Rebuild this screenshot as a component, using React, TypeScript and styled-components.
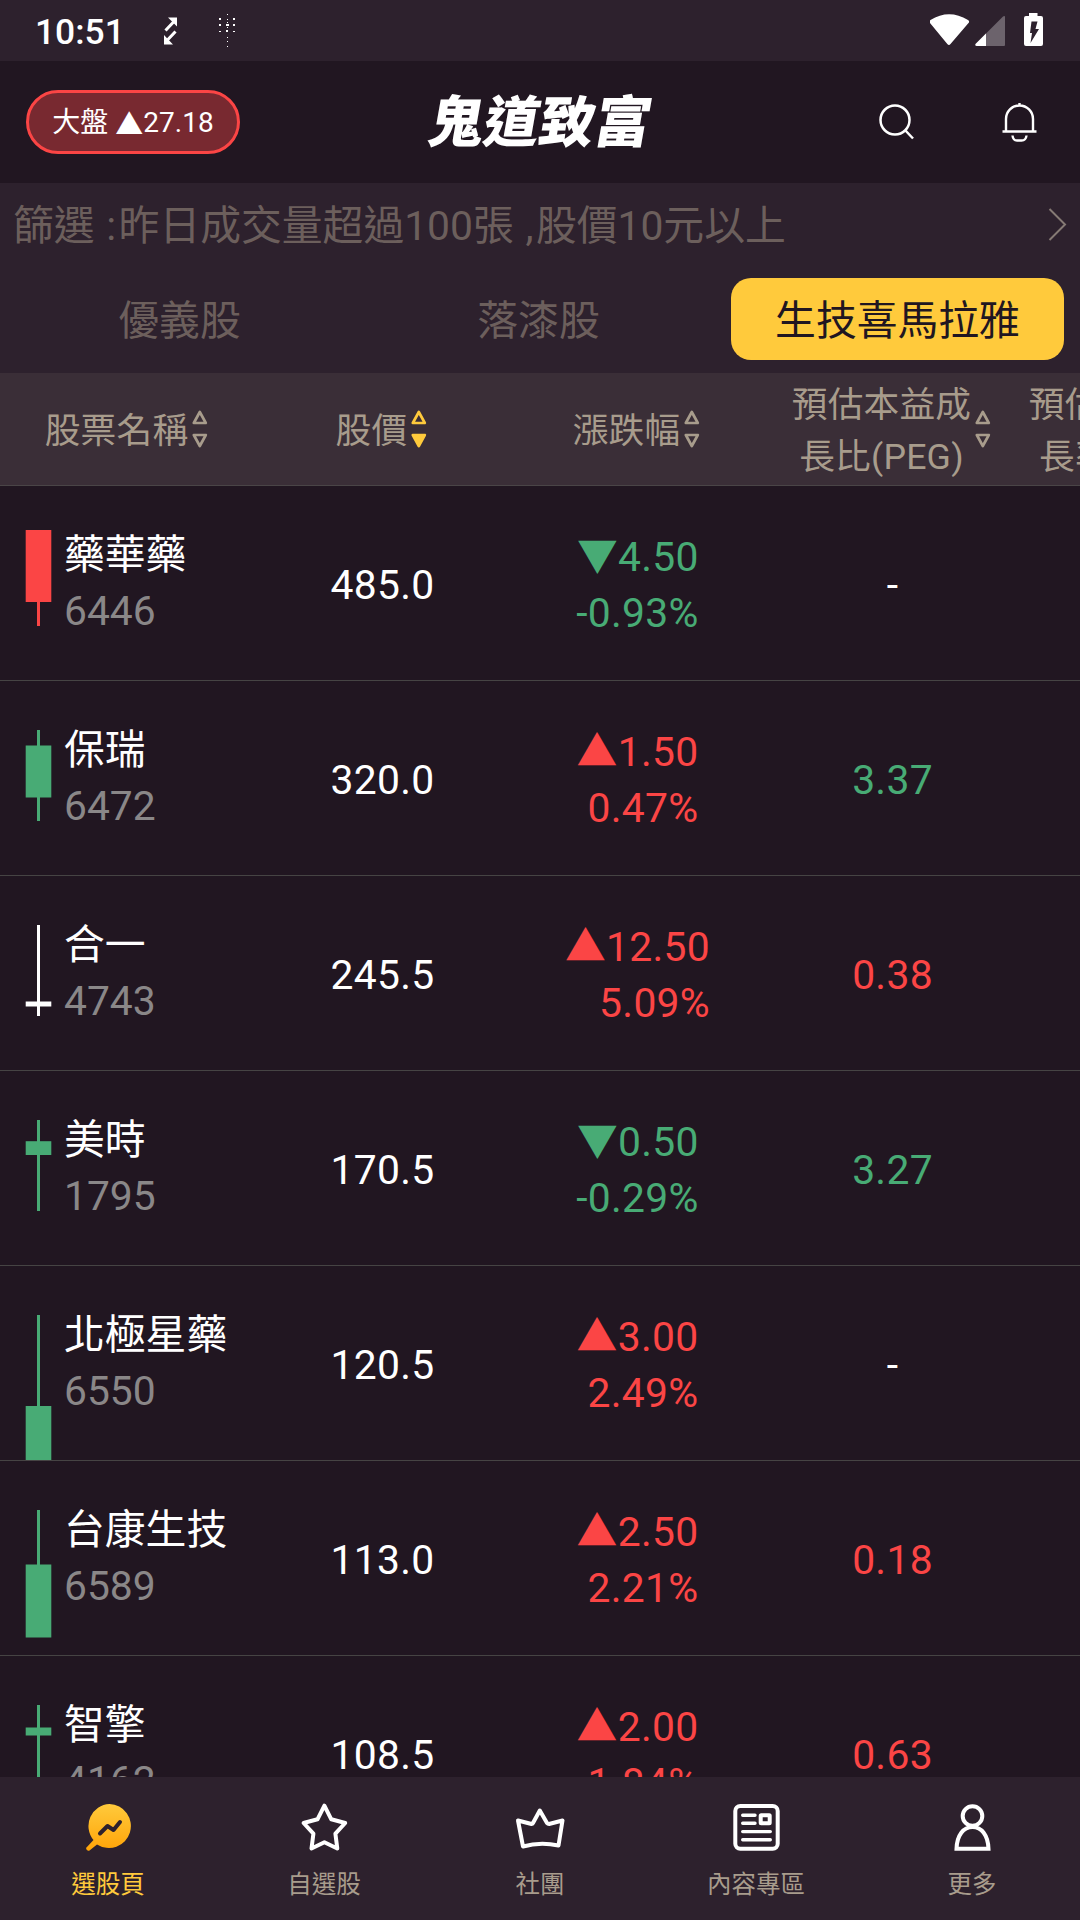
import React from "react";
import styled, { createGlobalStyle } from "styled-components";

const RED = "#fb4545";
const GREEN = "#48ab75";
const YELLOW = "#ffca3c";
const MUTED = "#a89c8c";

const Global = createGlobalStyle`
  * { box-sizing: border-box; }
  body { margin: 0; background: #211621; }
`;

const Screen = styled.div`
  width: 1080px;
  height: 1920px;
  overflow: hidden;
  display: flex;
  flex-direction: column;
  background: #211621;
  color: #fff;
  font-family: Roboto, "Noto Sans CJK TC", sans-serif;
  font-size: 40.8px;
  white-space: nowrap;
`;

const StatusBar = styled.div`
  height: 61px;
  flex: none;
  display: flex;
  align-items: center;
  justify-content: space-between;
  padding: 0 34px 0 35px;
  background: #2d212d;
`;

const StatusGroup = styled.div`
  display: flex;
  align-items: center;
  height: 61px;
`;

const Clock = styled.span`
  width: 128px;
  font-size: 35.4px;
  font-weight: 500;
  line-height: 61px;
  padding-top: 4px;
`;

const NoticeIcons = styled.div`
  display: flex;
  align-items: center;
  gap: 40px;
`;

const Header = styled.header`
  height: 122px;
  flex: none;
  display: grid;
  grid-template-columns: 1fr auto 1fr;
  align-items: center;
  padding: 0 43px 0 43px;
`;

const IndexPill = styled.div`
  justify-self: start;
  width: 214px;
  height: 64px;
  margin-left: -17px;
  padding-top: 2px;
  border: 3px solid ${RED};
  border-radius: 32px;
  background: #782930;
  display: flex;
  align-items: center;
  justify-content: center;
  font-size: 28px;
  line-height: 40px;
`;

const Brand = styled.h1`
  margin: 0 0 8px 3px;
  font-family: "Noto Sans CJK TC", sans-serif;
  font-size: 55.5px;
  line-height: 70px;
  font-weight: 900;
  transform: skewX(-10deg);
`;

const HeaderIcons = styled.div`
  justify-self: end;
  display: flex;
  align-items: center;
  gap: 86px;
`;

const FilterBar = styled.div`
  height: 82px;
  flex: none;
  display: flex;
  align-items: center;
  justify-content: space-between;
  padding: 0 13px;
  background: #2d212d;
  color: #6c5f5c;
`;

const FilterText = styled.div`
  line-height: 60px;
  padding-top: 3px;
`;

const Punct = styled.span`
  margin: 0 2.5px 0 1.5px;
`;

const Tabs = styled.nav`
  height: 108px;
  flex: none;
  display: grid;
  grid-template-columns: repeat(3, 333px);
  gap: 26px;
  padding: 13px;
  background: #2d212d;
`;

const Tab = styled.button<{ $active?: boolean }>`
  border: 0;
  padding: 0 0 4px 0;
  font: inherit;
  border-radius: 20px;
  background: ${(p) => (p.$active ? YELLOW : "transparent")};
  color: ${(p) => (p.$active ? "#211621" : "#6c5f5c")};
`;

const COLUMNS = "repeat(5, 255px)";

const TableHead = styled.div`
  height: 113px;
  flex: none;
  display: grid;
  grid-template-columns: ${COLUMNS};
  background: #3a2e37;
  border-bottom: 1px solid #4a4547;
  color: ${MUTED};
  font-size: 35.7px;
  line-height: 52px;
`;

const HeadCell = styled.div`
  display: flex;
  align-items: center;
  justify-content: center;
  text-align: center;
  white-space: pre-line;
`;

const HeadLabel = styled.span`
  padding-top: 3px;
  letter-spacing: 0.2px;
`;

const List = styled.main`
  flex: 1;
  min-height: 0;
  overflow: hidden;
`;

const Row = styled.div`
  height: 195px;
  display: grid;
  grid-template-columns: ${COLUMNS};
  border-bottom: 1px solid #464444;
  overflow: hidden;
`;

const Cell = styled.div<{ $color?: string }>`
  display: flex;
  align-items: center;
  justify-content: center;
  padding-top: 3px;
  letter-spacing: 0.3px;
  color: ${(p) => p.$color ?? "#fff"};
`;

const NameCell = styled.div`
  display: flex;
  gap: 12px;
  padding-left: 25px;
`;

const NameText = styled.div`
  padding-top: 41px;
  line-height: 56px;
`;

const Code = styled.div`
  color: #8a8788;
`;

const Change = styled.div`
  text-align: right;
  line-height: 56px;
`;

const Arrow = styled.span`
  font-family: "Noto Sans CJK TC", sans-serif;
  line-height: 1;
`;

const BottomNav = styled.nav`
  height: 143px;
  flex: none;
  display: grid;
  grid-template-columns: repeat(5, 216px);
  background: #2d212d;
`;

const NavItem = styled.div<{ $active?: boolean }>`
  display: flex;
  flex-direction: column;
  align-items: center;
  padding-top: 25px;
  gap: 15px;
  font-size: 24.5px;
  line-height: 36px;
  color: ${(p) => (p.$active ? YELLOW : MUTED)};
`;

type Sort = "none" | "desc";

function SortIcon({ sort = "none" }: { sort?: Sort }) {
  const c = sort === "desc" ? YELLOW : MUTED;
  return (
    <svg width="22" height="38" viewBox="0 0 22 38" fill="none" stroke={c} strokeWidth="2.7" strokeLinejoin="round">
      <path d="M11.8 2 L17.8 13 H5.8 Z" />
      <path d="M11.8 36 L17.8 25 H5.8 Z" fill={sort === "desc" ? c : "none"} />
    </svg>
  );
}

interface CandleData {
  color: string;
  wick: [number, number];
  body: [number, number];
}

function Candle({ color, wick, body }: CandleData) {
  return (
    <svg width="27" height="194" viewBox="0 0 27 194" fill={color}>
      <rect x="12" y={wick[0]} width="3" height={wick[1] - wick[0]} />
      <rect x="0.7" y={body[0]} width="25.6" height={body[1] - body[0]} />
    </svg>
  );
}

interface Stock {
  name: string;
  code: string;
  price: string;
  up: boolean;
  change: string;
  percent: string;
  peg: string;
  pegColor?: string;
  candle: CandleData;
}

const stocks: Stock[] = [
  { name: "藥華藥", code: "6446", price: "485.0", up: false, change: "4.50", percent: "-0.93%", peg: "-", candle: { color: RED, wick: [44, 140], body: [44, 116] } },
  { name: "保瑞", code: "6472", price: "320.0", up: true, change: "1.50", percent: "0.47%", peg: "3.37", pegColor: GREEN, candle: { color: GREEN, wick: [49, 140], body: [64.5, 116.5] } },
  { name: "合一", code: "4743", price: "245.5", up: true, change: "12.50", percent: "5.09%", peg: "0.38", pegColor: RED, candle: { color: "#fff", wick: [49, 140], body: [125.5, 130.5] } },
  { name: "美時", code: "1795", price: "170.5", up: false, change: "0.50", percent: "-0.29%", peg: "3.27", pegColor: GREEN, candle: { color: GREEN, wick: [49, 140], body: [70.2, 84] } },
  { name: "北極星藥", code: "6550", price: "120.5", up: true, change: "3.00", percent: "2.49%", peg: "-", candle: { color: GREEN, wick: [49, 140], body: [140, 194] } },
  { name: "台康生技", code: "6589", price: "113.0", up: true, change: "2.50", percent: "2.21%", peg: "0.18", pegColor: RED, candle: { color: GREEN, wick: [49, 140], body: [103.5, 176.5] } },
  { name: "智擎", code: "4162", price: "108.5", up: true, change: "2.00", percent: "1.84%", peg: "0.63", pegColor: RED, candle: { color: GREEN, wick: [49, 140], body: [71.5, 79.5] } },
];

const heads: { label: string; sort?: Sort }[] = [
  { label: "股票名稱" },
  { label: "股價", sort: "desc" },
  { label: "漲跌幅" },
  { label: "預估本益成\n長比(PEG)" },
  { label: "預估營收年成\n長率 (YoY%)" },
];

const LinkIcon = () => (
  <svg width="15" height="28" viewBox="0 0 15 28">
    <path d="M2.5 13.5 L11 4.5 M12.5 14.5 L4 23.5" stroke="#fff" strokeWidth="3" />
    <path d="M5 0.5 H14 V9.5 Z M1 18 V27.5 H10 Z" fill="#fff" />
  </svg>
);

const DotsIcon = () => (
  <svg width="18" height="36" viewBox="0 0 18 36" fill="#fff">
    <path d="M1 5h2v2h-2z M15 5h2v2h-2z M1 11h2v2h-2z M8 11h3v2h-3z M15 11h2v2h-2z M1 18h2v1h-2z M8 17h2v2h-2z M15 18h2v1h-2z M9 1h1v1h-1z M9 6h1v1h-1z M9 9h1v1h-1z M9 14h1v1h-1z M9 24h1v1h-1z M9 28h1v1h-1z M9 33h1v1h-1z" />
  </svg>
);

const StatusIcons = () => (
  <svg width="116" height="35" viewBox="0 0 116 35" fill="#fff">
    <path d="M0 10 Q-1 8.500 0.500 7 Q19 -4.500 38 7 Q40 8.500 38.500 10 L20.500 31 Q19 33 17.300 31 Z" />
    <path d="M75 3.5 V32 Q75 33 74 33 H46.500 Q44.500 32.500 45.500 31 L73 3.500 Q74.500 2.500 75 3.500 Z" fill="#6c636c" />
    <path d="M56 20.500 V33 H46.500 Q44.500 32.500 45.500 31 Z" />
    <path d="M99 0 H107.500 V3 H111 Q113 3 113 5 V31 Q113 33 111 33 H96 Q94 33 94 31 V5 Q94 3 96 3 H99 Z" />
    <path d="M101.500 8.500 H107.500 L105.500 16 H109 L100.500 30 L102 20 H100 Z" fill="#2d212d" />
  </svg>
);

const SearchIcon = () => (
  <svg width="36" height="36" viewBox="0 0 36 36" fill="none" stroke="#fff" strokeWidth="2.500">
    <circle cx="16" cy="16" r="14.500" />
    <path d="M26 26 L34 34.500" />
  </svg>
);

const BellIcon = () => (
  <svg width="36" height="40" viewBox="0 0 36 40" fill="none" stroke="#fff" strokeWidth="2.400">
    <path d="M5 29 V17 A13.500 13.500 0 0 1 32 17 V29 M1.500 29.500 H35.500 M18.500 1 V4" />
    <path d="M11.500 33.500 Q12 38.500 16 38.500 H20.500 Q25 38.500 25.500 33.500" />
  </svg>
);

const ChevronIcon = () => (
  <svg width="20" height="34" viewBox="0 0 20 34" fill="none" stroke="#857a74" strokeWidth="2">
    <path d="M2.500 2 L18 17.500 L2.500 33" />
  </svg>
);

const PickIcon = () => (
  <svg width="48" height="50" viewBox="0 0 48 50">
    <defs>
      <linearGradient id="pick" x1="0" y1="0" x2="0" y2="1">
        <stop offset="0" stopColor="#ffca3c" />
        <stop offset="1" stopColor="#ffa408" />
      </linearGradient>
    </defs>
    <path d="M25.500 2 A22 22 0 1 1 13 42.500 L5.500 48.500 Q2.500 49.500 2 46 L9.500 38 A22 22 0 0 1 25.500 2 Z" fill="url(#pick)" />
    <path d="M16 31.500 L23.500 24 L29.500 28 L36 20" fill="none" stroke="#2d212d" strokeWidth="4" strokeLinecap="round" strokeLinejoin="round" />
  </svg>
);

const line = { fill: "none", stroke: "#fff", strokeWidth: 4, strokeLinejoin: "round" as const, strokeLinecap: "round" as const };

const StarIcon = () => (
  <svg width="48" height="50" viewBox="0 0 48 50" {...line}>
    <path d="M24.400 3.700 L31.300 17.300 L45.200 21 L35.400 31.700 L37.300 46.500 L24.400 40.300 L11.500 46.500 L13.400 31.700 L3.600 21 L17.500 17.300 Z" />
  </svg>
);

const CrownIcon = () => (
  <svg width="52" height="50" viewBox="0 0 52 50" {...line}>
    <path d="M4 18.500 L17.500 22 Q18.500 22 19 21 L25.800 8.500 L33 21 Q33.800 22 35 22 L48.500 18.500 L44.500 43.500 Q26 39.500 9 44.500 Z" />
  </svg>
);

const NewsIcon = () => (
  <svg width="48" height="50" viewBox="0 0 48 50" {...line}>
    <rect x="3.300" y="4" width="42.400" height="42.700" rx="5" />
    <path d="M10.700 13.200 H23 M10.700 21.300 H23 M10.700 29.600 H38.300 M10.700 37.700 H38.300" strokeWidth="3.400" />
    <rect x="28.700" y="13.300" width="9" height="8" rx="0.500" />
  </svg>
);

const PersonIcon = () => (
  <svg width="48" height="50" viewBox="0 0 48 50" {...line} strokeLinejoin="miter">
    <circle cx="24.500" cy="14" r="9.800" />
    <path d="M8.500 46.700 C9 33 15.500 25 24.500 25 C33.500 25 40 33 40.500 46.700 Z" />
  </svg>
);

const navItems = [
  { label: "選股頁", icon: <PickIcon />, active: true },
  { label: "自選股", icon: <StarIcon /> },
  { label: "社團", icon: <CrownIcon /> },
  { label: "內容專區", icon: <NewsIcon /> },
  { label: "更多", icon: <PersonIcon /> },
];

export default function App() {
  return (
    <Screen>
      <Global />
      <StatusBar>
        <StatusGroup>
          <Clock>10:51</Clock>
          <NoticeIcons>
            <LinkIcon />
            <DotsIcon />
          </NoticeIcons>
        </StatusGroup>
        <StatusIcons />
      </StatusBar>
      <Header>
        <IndexPill>
          大盤&nbsp;<Arrow>▲</Arrow>27.18
        </IndexPill>
        <Brand>鬼道致富</Brand>
        <HeaderIcons>
          <SearchIcon />
          <BellIcon />
        </HeaderIcons>
      </Header>
      <FilterBar>
        <FilterText>
          篩選 <Punct>:</Punct>昨日成交量超過100張 <Punct>,</Punct>股價10元以上
        </FilterText>
        <ChevronIcon />
      </FilterBar>
      <Tabs>
        <Tab>優義股</Tab>
        <Tab>落漆股</Tab>
        <Tab $active>生技喜馬拉雅</Tab>
      </Tabs>
      <TableHead>
        {heads.map((h) => (
          <HeadCell key={h.label}>
            <HeadLabel>{h.label}</HeadLabel>
            <SortIcon sort={h.sort} />
          </HeadCell>
        ))}
      </TableHead>
      <List>
        {stocks.map((s) => (
          <Row key={s.code}>
            <NameCell>
              <Candle {...s.candle} />
              <NameText>
                <div>{s.name}</div>
                <Code>{s.code}</Code>
              </NameText>
            </NameCell>
            <Cell>{s.price}</Cell>
            <Cell $color={s.up ? RED : GREEN}>
              <Change>
                <div>
                  <Arrow>{s.up ? "▲" : "▼"}</Arrow>
                  {s.change}
                </div>
                <div>{s.percent}</div>
              </Change>
            </Cell>
            <Cell $color={s.pegColor}>{s.peg}</Cell>
          </Row>
        ))}
      </List>
      <BottomNav>
        {navItems.map((n) => (
          <NavItem key={n.label} $active={n.active}>
            {n.icon}
            <span>{n.label}</span>
          </NavItem>
        ))}
      </BottomNav>
    </Screen>
  );
}
